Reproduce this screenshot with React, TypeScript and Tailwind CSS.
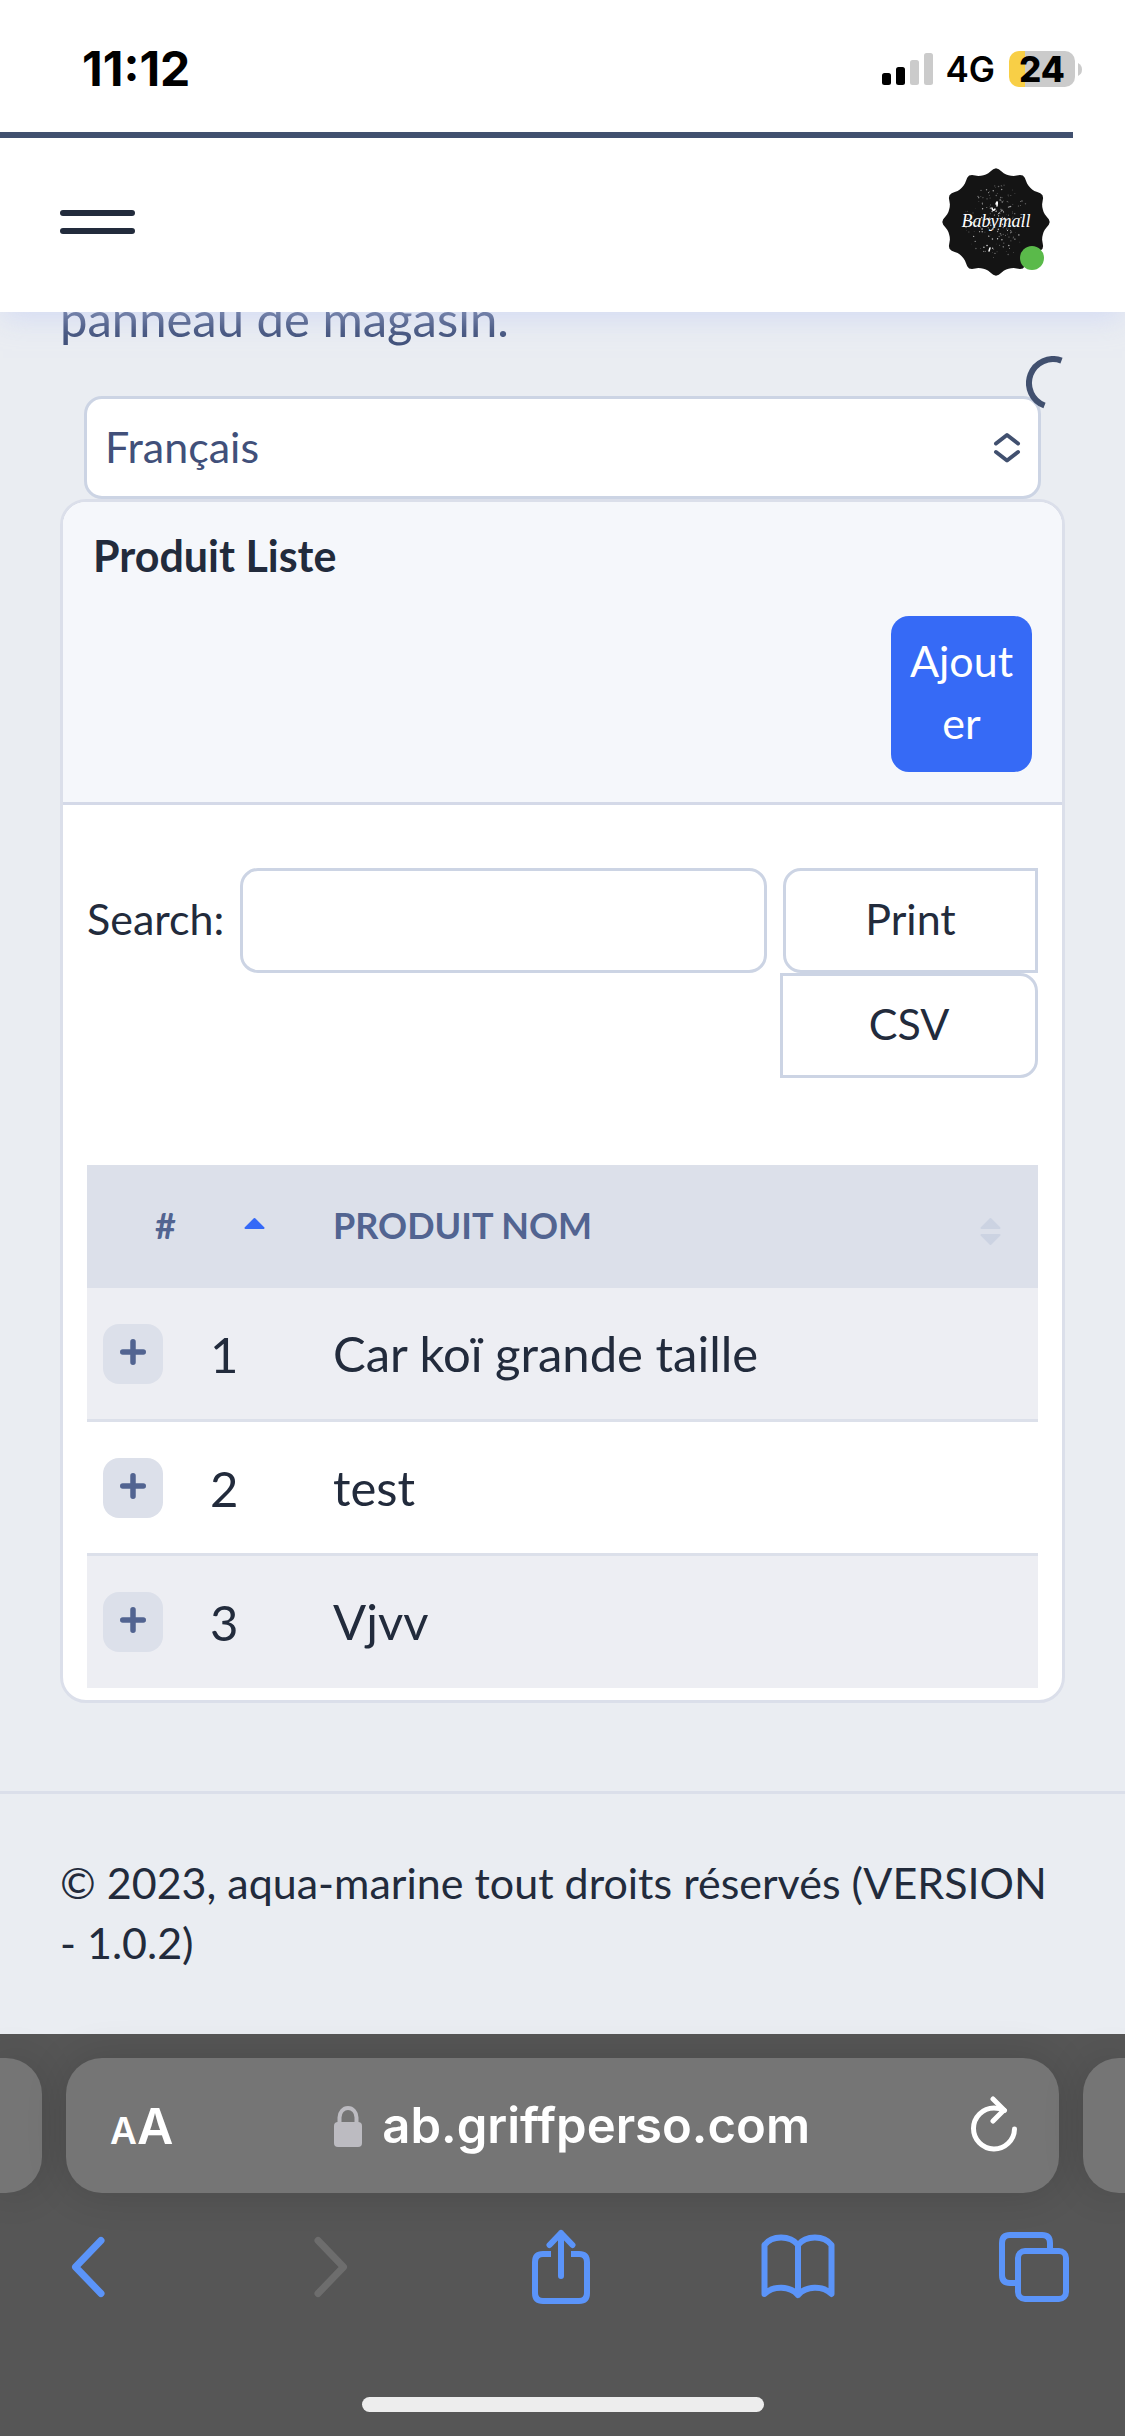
import React from 'react';

const products = [
  { id: 1, name: 'Car koï grande taille' },
  { id: 2, name: 'test' },
  { id: 3, name: 'Vjvv' },
];

/* Twelve-lobed seal outline, centred on 54,54. */
const sealPath = (() => {
  const points: string[] = [];
  for (let deg = 0; deg < 360; deg += 3) {
    const a = (deg * Math.PI) / 180;
    const r = 50.6 + 2.6 * Math.cos(12 * a) + 0.5 * Math.cos(24 * a);
    points.push(`${(54 + r * Math.sin(a)).toFixed(2)},${(54 - r * Math.cos(a)).toFixed(2)}`);
  }
  return `M${points.join('L')}Z`;
})();

/* Paint specks scattered around the brand name. */
const specks = Array.from({ length: 190 }, (_, i) => {
  const a = i * i * 0.731 + i * 1.93;
  const r = 6 + ((i * 37) % 101) * 0.31;
  return {
    x: 54 + r * Math.cos(a) * 0.9,
    y: 53 + r * Math.sin(a),
    r: 0.3 + ((i * 13) % 7) * 0.08,
    o: 0.3 + ((i * 29) % 10) * 0.06,
  };
});

function Logo() {
  return (
    <svg viewBox="0 0 108 108" className="size-[108px]" aria-hidden="true">
      <path d={sealPath} fill="#141414" />
      {specks.map((s, i) => (
        <circle key={i} cx={s.x} cy={s.y} r={s.r} fill="#fff" opacity={s.o} />
      ))}
      <path d="M50 40q1 4 3 1M54 36q2-5 1 2M47 83l1-3" stroke="#fff" strokeWidth="1.5" fill="none" strokeLinecap="round" />
      <text x="54" y="59" textAnchor="middle" fill="#fff" fontSize="18" fontStyle="italic" fontFamily="'Liberation Serif', serif">
        Babymall
      </text>
    </svg>
  );
}

function StatusBar() {
  return (
    <div className="flex h-[132px] items-center justify-between pt-1.5 pr-[43px] pl-[82px] font-['Inter',sans-serif] text-black">
      <span className="text-[48px] leading-none font-bold">11:12</span>
      <div className="flex items-center">
        <svg viewBox="0 0 51 32" className="h-8 w-[51px]" aria-hidden="true">
          <rect x="0" y="20" width="9" height="12" rx="2.5" />
          <rect x="14" y="14" width="9" height="18" rx="2.5" />
          <rect x="28" y="7" width="9" height="25" rx="2.5" fill="#cbcbcb" />
          <rect x="42" y="0" width="9" height="32" rx="2.5" fill="#cbcbcb" />
        </svg>
        <span className="ml-3 text-[35px] leading-none font-semibold">4G</span>
        <div className="ml-3.5 flex h-9 w-[66px] items-center justify-center rounded-[10px] bg-[linear-gradient(to_right,#f8cf46_16px,#cbcbcb_16px)]">
          <span className="text-[35px] leading-none font-extrabold">24</span>
        </div>
        <svg viewBox="0 0 4 13" className="ml-[3px] h-[13px] w-1" aria-hidden="true">
          <path d="M0 0Q4 2 4 6.500T0 13Z" fill="#cbcbcb" />
        </svg>
      </div>
    </div>
  );
}

function SortIcon({ active }: { active?: boolean }) {
  return (
    <svg viewBox="0 0 21 28" className="mt-3 h-7 w-[21px]" strokeWidth="2" strokeLinejoin="round" aria-hidden="true">
      <path d="M1.500 11L10.500 2L19.500 11Z" fill={active ? '#3569f7' : '#ccd3e2'} stroke={active ? '#3569f7' : '#ccd3e2'} />
      {!active && <path d="M1.500 18L10.500 27L19.500 18Z" fill="#ccd3e2" stroke="#ccd3e2" />}
    </svg>
  );
}

function BrowserBar() {
  const icon = 'flex h-20 w-20 items-center justify-center';
  return (
    <div className="bg-[#565656] pt-6 pb-6">
      <div className="flex h-[135px] gap-6">
        <div className="w-[42px] rounded-r-[36px] bg-[#757575] shadow-[0_0_42px_rgba(0,0,0,0.14)]" />
        <div className="flex flex-1 items-center justify-between rounded-[36px] bg-[#757575] px-[42px] font-['Inter',sans-serif] text-white shadow-[0_0_42px_rgba(0,0,0,0.14)]">
          <button type="button" aria-label="Taille du texte" className="flex items-baseline pl-0.5 leading-none font-semibold">
            <span className="text-[37px]">A</span>
            <span className="text-[50px]">A</span>
          </button>
          <div className="flex items-center gap-5">
            <svg viewBox="0 0 28 42" className="h-[42px] w-7" aria-hidden="true">
              <path d="M5.500 19V12.500a8.500 9.500 0 0 1 17 0V19" fill="none" stroke="#bcbbc1" strokeWidth="4" />
              <rect x="0" y="17" width="28" height="25" rx="4" fill="#bcbbc1" />
            </svg>
            <span className="text-[49px] leading-none font-semibold">ab.griffperso.com</span>
          </div>
          <button type="button" aria-label="Actualiser" className="pb-1">
            <svg viewBox="0 0 46 56" className="h-14 w-[46px]" fill="none" stroke="#fff" strokeWidth="5" strokeLinecap="round" strokeLinejoin="round" aria-hidden="true">
              <path d="M33.500 14.500C30 12.500 27 12 23 12A20.500 20.500 0 1 0 43.500 33" />
              <path d="M22 3L33 14L22 25" />
            </svg>
          </button>
        </div>
        <div className="w-[42px] rounded-l-[36px] bg-[#757575] shadow-[0_0_42px_rgba(0,0,0,0.14)]" />
      </div>
      <nav aria-label="Navigateur" className="mt-[34px] flex justify-between pr-[51px] pl-12">
        <button type="button" aria-label="Page précédente" className={icon}>
          <svg viewBox="0 0 34 62" className="h-[62px] w-[34px]" fill="none" stroke="#5b94f9" strokeWidth="7" strokeLinecap="round" strokeLinejoin="round">
            <path d="M30 4.500L4.500 31L30 57.500" />
          </svg>
        </button>
        <button type="button" disabled aria-label="Page suivante" className={icon + ' pl-3'}>
          <svg viewBox="0 0 34 62" className="h-[62px] w-[34px]" fill="none" stroke="#6d6d6d" strokeWidth="7" strokeLinecap="round" strokeLinejoin="round">
            <path d="M4 4.500L29.500 31L4 57.500" />
          </svg>
        </button>
        <button type="button" aria-label="Partager" className={icon}>
          <svg viewBox="0 0 58 76" className="h-[76px] w-[58px]" fill="none" stroke="#5b94f9" strokeWidth="6" strokeLinejoin="round">
            <path d="M19 25H11Q3 25 3 33V64Q3 72 11 72H47Q55 72 55 64V33Q55 25 47 25H39" />
            <path d="M29 47V4M17.500 16L29 4L40.500 16" strokeLinecap="round" />
          </svg>
        </button>
        <button type="button" aria-label="Signets" className={icon}>
          <svg viewBox="0 0 74 66" className="h-[66px] w-[74px]" fill="none" stroke="#5b94f9" strokeWidth="6" strokeLinecap="round" strokeLinejoin="round">
            <path d="M37 61V11C29 1 11 1 3.500 11V60C12 51.500 29 51.500 37 61C45 51.500 62 51.500 70.500 60V11C63 1 45 1 37 11" />
          </svg>
        </button>
        <button type="button" aria-label="Onglets" className={icon}>
          <svg viewBox="0 0 70 70" className="size-[70px]" fill="none" stroke="#5b94f9" strokeWidth="6">
            <rect x="19" y="19" width="48" height="48" rx="7" />
            <path d="M19 51H11Q3 51 3 43V11Q3 3 11 3H43Q51 3 51 11V19" />
          </svg>
        </button>
      </nav>
      <div className="mx-auto mt-[90px] h-[15px] w-[402px] rounded-full bg-[#ededed]" />
    </div>
  );
}

export default function App() {
  return (
    <div className="flex min-h-screen flex-col bg-[#eaedf2] font-['Lato',sans-serif] text-[43px] text-[#222b3c]">
      <header className="relative z-10 bg-white shadow-[0_9px_27px_-3px_rgba(196,207,245,0.6)]">
        <StatusBar />
        <div className="mr-[52px] h-1.5 bg-[#41506f] shadow-[18px_9px_30px_-6px_rgba(65,80,111,0.14)]" />
        <div className="flex h-[174px] items-center justify-between pr-[75px] pb-1.5 pl-[60px]">
          <button type="button" aria-label="Menu" className="flex w-[75px] flex-col gap-3">
            <span className="h-1.5 rounded-full bg-[#222b3c]" />
            <span className="h-1.5 rounded-full bg-[#222b3c]" />
          </button>
          <button type="button" aria-label="Profil Babymall" className="relative">
            <Logo />
            <span className="absolute right-1.5 bottom-1.5 size-6 rounded-full bg-[#5aba4a]" />
          </button>
        </div>
      </header>

      <main className="relative px-[60px]">
        <p className="-mt-[30px] text-[49px] leading-[72px] text-[#41517a]">panneau de magasin.</p>
        <div className="relative mx-6 mt-[42px]">
          <select
            aria-label="Langue"
            className="block h-[103px] w-full appearance-none rounded-[18px] border-3 border-[#ccd4e4] bg-white pr-20 pl-[18px] text-[#41507a]"
          >
            <option>Français</option>
          </select>
          <svg
            viewBox="0 0 28 32"
            className="pointer-events-none absolute top-9 right-5 h-8 w-7"
            fill="none"
            stroke="#41506f"
            strokeWidth="4"
            strokeLinecap="round"
            strokeLinejoin="round"
            aria-hidden="true"
          >
            <path d="M3 11.500L14 3L25 11.500M3 20L14 28.500L25 20" />
          </svg>
        </div>
        <svg viewBox="0 0 37 54" className="absolute top-11 right-[62px] h-[54px] w-[37px]" fill="none" stroke="#41506f" strokeWidth="6" role="img" aria-label="Chargement">
          <path d="M35.500 4.600A24 24 0 1 0 18.500 49.500" />
        </svg>

        <section className="overflow-hidden rounded-[26px] border-3 border-[#dbdfea] bg-white">
          <div className="border-b-3 border-[#d4d9e8] bg-[#f5f7fb] px-[30px] pt-[22px] pb-[30px]">
            <h1 className="leading-[64px] font-bold">Produit Liste</h1>
            <div className="mt-7 flex justify-end">
              <button type="button" className="w-[141px] rounded-[18px] bg-[#366af6] px-4 pt-3.5 pb-[18px] leading-[62px] break-all text-white">
                Ajouter
              </button>
            </div>
          </div>

          <div className="px-6 pt-[63px] pb-3">
            <div className="flex items-start gap-4">
              <label htmlFor="search" className="leading-[102px]">
                Search:
              </label>
              <input
                id="search"
                type="search"
                className="h-[105px] min-w-0 flex-1 appearance-none rounded-[18px] border-3 border-[#ccd4e4] bg-white px-4"
              />
              <div className="flex w-[255px] flex-col">
                <button type="button" className="h-[105px] rounded-l-[18px] border-3 border-[#ccd4e4] bg-white pb-0.5">
                  Print
                </button>
                <button type="button" className="-ml-[3px] h-[105px] rounded-r-[18px] border-3 border-[#ccd4e4] bg-white pb-0.5">
                  CSV
                </button>
              </div>
            </div>

            <table className="mt-[87px] w-full border-separate border-spacing-0 text-left">
              <thead className="bg-[#dce0ea] text-[36px] text-[#526491]">
                <tr className="h-[123px]">
                  <th scope="col" aria-sort="ascending" className="w-[246px] p-0 font-bold">
                    <button type="button" className="flex w-full items-center justify-between pr-[68px] pb-1 pl-[68px]">
                      # <SortIcon active />
                    </button>
                  </th>
                  <th scope="col" className="p-0 font-bold">
                    <button type="button" className="flex w-full items-center justify-between pr-[37px] pb-1">
                      PRODUIT NOM <SortIcon />
                    </button>
                  </th>
                </tr>
              </thead>
              <tbody className="text-[49px]">
                {products.map((p) => (
                  <tr key={p.id} className="group odd:bg-[#edeef3]">
                    <td className="h-[134px] border-b-3 border-[#dce0ea] p-0 group-last:h-[132px] group-last:border-b-0">
                      <div className="flex items-center pl-4">
                        <button type="button" aria-label={`Détails de ${p.name}`} className="flex size-[60px] items-center justify-center rounded-2xl bg-[#dce0ea] pb-1">
                          <svg viewBox="0 0 26 26" className="size-[26px]" stroke="#526491" strokeWidth="5.500" strokeLinecap="round" aria-hidden="true">
                            <path d="M13 2.750V23.250M2.750 13H23.250" />
                          </svg>
                        </button>
                        <span className="pl-[47px] leading-[60px]">{p.id}</span>
                      </div>
                    </td>
                    <td className="border-b-3 border-[#dce0ea] p-0 group-last:border-b-0">{p.name}</td>
                  </tr>
                ))}
              </tbody>
            </table>
          </div>
        </section>
      </main>

      <footer className="mt-[88px] border-t-3 border-[#dbdfea] px-[60px] pt-[59px] pb-[61px] leading-[60px]">
        © 2023, aqua-marine tout droits réservés (VERSION - 1.0.2)
      </footer>

      <BrowserBar />
    </div>
  );
}
